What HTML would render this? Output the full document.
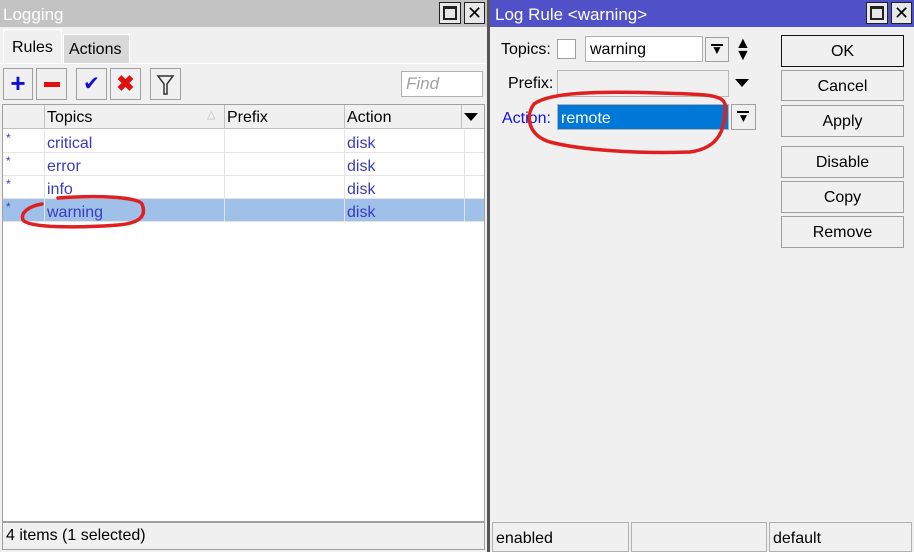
<!DOCTYPE html><html><head><style>
*{box-sizing:border-box}body{margin:0;width:914px;height:552px;background:#f0f0f0;font-family:"Liberation Sans",sans-serif;font-size:16px;position:relative;overflow:hidden}
.a{position:absolute}
.btn{position:absolute;border:1px solid #a0a0a0;background:#f0f0f0;text-align:center}
.row{position:absolute;left:3px;width:481px;height:23px;border-bottom:1px solid #e4e4e4;color:#3b3bbf}
.st{position:absolute;left:6px;color:#3b3bbf;font-size:12px}
</style></head><body>
<div class="a" style="left:0;top:0;width:488px;height:27px;background:#c3c3c3"></div>
<div class="a" style="left:3px;top:5px;color:#fff;font-size:17px">Logging</div>
<div class="a" style="left:439px;top:2px;width:22px;height:22px;border:1px solid #222;background:#e8e8e8"><div class="a" style="left:3px;top:3px;width:14px;height:14px;border:2px solid #222;border-top-width:3px"></div></div>
<div class="a" style="left:464px;top:2px;width:21px;height:22px;border:1px solid #222;background:#e8e8e8;text-align:center;font-size:18px;line-height:20px">✕</div>
<div class="a" style="left:3px;top:29px;width:59px;height:35px;background:#f0f0f0;border:1px solid #fff;border-bottom:none"></div>
<div class="a" style="left:12px;top:39px">Rules</div>
<div class="a" style="left:63px;top:34px;width:67px;height:30px;background:#d8d8d8;border:1px solid #fff"></div>
<div class="a" style="left:69px;top:41px">Actions</div>
<div class="a" style="left:0;top:63px;width:488px;height:1px;background:#fff"></div>
<div class="btn" style="left:3px;top:68px;width:30px;height:32px;color:#1010d0;font-size:26px;font-weight:bold;line-height:28px">+</div>
<div class="btn" style="left:36px;top:68px;width:31px;height:32px"><div class="a" style="left:7px;top:13px;width:16px;height:5px;background:#e01010"></div></div>
<div class="btn" style="left:76px;top:68px;width:31px;height:32px;color:#1010d0;font-size:20px;line-height:30px">✔</div>
<div class="btn" style="left:110px;top:68px;width:31px;height:32px;color:#e01010;font-size:22px;font-weight:bold;line-height:30px">✖</div>
<div class="btn" style="left:150px;top:68px;width:31px;height:32px"><svg width="29" height="30"><path d="M7 7H22L16 15V25H13V15Z" fill="none" stroke="#333" stroke-width="1.5"/></svg></div>
<div class="a" style="left:401px;top:71px;width:82px;height:26px;background:#fff;border:1px solid #b0b0b0;color:#a0a0a0;font-style:italic;padding:2px 4px;font-size:17px">Find</div>
<div class="a" style="left:2px;top:104px;width:483px;height:418px;background:#fff;border:1px solid #a0a0a0"></div>
<div class="a" style="left:3px;top:105px;width:481px;height:24px;background:#f0f0f0;border-bottom:1px solid #c0c0c0"></div>
<div class="a" style="left:44px;top:105px;width:1px;height:24px;background:#c0c0c0"></div>
<div class="a" style="left:224px;top:105px;width:1px;height:24px;background:#c0c0c0"></div>
<div class="a" style="left:344px;top:105px;width:1px;height:24px;background:#c0c0c0"></div>
<div class="a" style="left:461px;top:105px;width:1px;height:24px;background:#c0c0c0"></div>
<div class="a" style="left:47px;top:109px">Topics</div><div class="a" style="left:207px;top:108px;color:#bbb;font-size:11px">△</div>
<div class="a" style="left:227px;top:109px">Prefix</div>
<div class="a" style="left:347px;top:109px">Action</div>
<div class="a" style="left:464px;top:113px;width:0;height:0;border-left:7px solid transparent;border-right:7px solid transparent;border-top:8px solid #000"></div>
<div class="row" style="top:130px"></div><div class="row" style="top:153px"></div><div class="row" style="top:176px"></div>
<div class="row" style="top:199px;background:#9fc0e8"></div>
<div class="a" style="left:44px;top:130px;width:1px;height:92px;background:#e4e4e4"></div>
<div class="a" style="left:224px;top:130px;width:1px;height:92px;background:#e4e4e4"></div>
<div class="a" style="left:344px;top:130px;width:1px;height:92px;background:#e4e4e4"></div>
<div class="a" style="left:464px;top:130px;width:1px;height:92px;background:#e4e4e4"></div>
<div class="st" style="top:131px">*</div><div class="st" style="top:154px">*</div><div class="st" style="top:177px">*</div><div class="st" style="top:200px">*</div>
<div class="a" style="left:47px;top:132px;color:#3b3bbf;line-height:23px">critical<br>error<br>info<br>warning</div>
<div class="a" style="left:347px;top:132px;color:#3b3bbf;line-height:23px">disk<br>disk<br>disk<br>disk</div>
<svg class="a" style="left:18px;top:192px" width="132" height="40"><path d="M24 12C12 14 2 20 5 28C10 36 60 36 100 33C125 31 128 22 124 12C120 5 80 3 40 6" fill="none" stroke="#e02020" stroke-width="3.5" stroke-linecap="round"/></svg>
<div class="a" style="left:2px;top:522px;width:483px;height:28px;border:1px solid #a0a0a0;background:#f0f0f0;padding:4px 3px">4 items (1 selected)</div>
<div class="a" style="left:487px;top:0;width:3px;height:552px;background:#555"></div>
<div class="a" style="left:490px;top:0;width:424px;height:27px;background:#5050c8"></div>
<div class="a" style="left:495px;top:5px;color:#fff;font-size:17px">Log Rule &lt;warning&gt;</div>
<div class="a" style="left:866px;top:2px;width:22px;height:22px;border:1px solid #222;background:#e8e8e8"><div class="a" style="left:3px;top:3px;width:14px;height:14px;border:2px solid #222;border-top-width:3px"></div></div>
<div class="a" style="left:891px;top:2px;width:21px;height:22px;border:1px solid #222;background:#e8e8e8;text-align:center;font-size:18px;line-height:20px">✕</div>
<div class="a" style="left:501px;top:41px">Topics:</div>
<div class="a" style="left:557px;top:39px;width:19px;height:20px;background:#fff;border:1px solid #a0a0a0"></div>
<div class="a" style="left:585px;top:36px;width:118px;height:26px;background:#fff;border:1px solid #b0b0b0;padding:4px 4px">warning</div>
<div class="btn" style="left:705px;top:37px;width:24px;height:25px;font-size:12px;line-height:24px">▼</div>
<div class="a" style="left:711px;top:44px;width:12px;height:2px;background:#000"></div>
<div class="a" style="left:735px;top:38px;font-size:16px;line-height:12px">▲<br>▼</div>
<div class="a" style="left:508px;top:75px">Prefix:</div>
<div class="a" style="left:557px;top:70px;width:172px;height:27px;border:1px solid #b8b8b8"></div>
<div class="a" style="left:735px;top:79px;width:0;height:0;border-left:7px solid transparent;border-right:7px solid transparent;border-top:8px solid #000"></div>
<div class="a" style="left:502px;top:110px;color:#1010e0">Action:</div>
<div class="a" style="left:557px;top:104px;width:172px;height:26px;background:#0078d7;border:1px solid #b0b0b0;color:#fff;padding:5px 3px">remote</div>
<div class="btn" style="left:731px;top:104px;width:25px;height:26px;font-size:12px;line-height:26px">▼</div>
<div class="a" style="left:737px;top:111px;width:12px;height:2px;background:#000"></div>
<svg class="a" style="left:520px;top:88px" width="220" height="70"><path d="M205 16C206 40 200 60 170 64C120 66 60 62 30 54C10 48 4 30 14 16C30 4 80 3 140 5C175 6 200 6 204 14" fill="none" stroke="#e02020" stroke-width="3.5" stroke-linecap="round"/></svg>
<div class="btn" style="left:781px;top:35px;width:123px;height:32px;border:1px solid #111;line-height:31px">OK</div>
<div class="btn" style="left:781px;top:70px;width:123px;height:31px;line-height:31px">Cancel</div>
<div class="btn" style="left:781px;top:105px;width:123px;height:32px;line-height:32px">Apply</div>
<div class="btn" style="left:781px;top:146px;width:123px;height:32px;line-height:32px">Disable</div>
<div class="btn" style="left:781px;top:181px;width:123px;height:32px;line-height:32px">Copy</div>
<div class="btn" style="left:781px;top:216px;width:123px;height:32px;line-height:32px">Remove</div>
<div class="a" style="left:492px;top:522px;width:137px;height:30px;border:1px solid #b0b0b0;padding:7px 3px">enabled</div>
<div class="a" style="left:631px;top:522px;width:136px;height:30px;border:1px solid #b0b0b0"></div>
<div class="a" style="left:769px;top:522px;width:143px;height:30px;border:1px solid #b0b0b0;padding:7px 3px">default</div>
</body></html>
